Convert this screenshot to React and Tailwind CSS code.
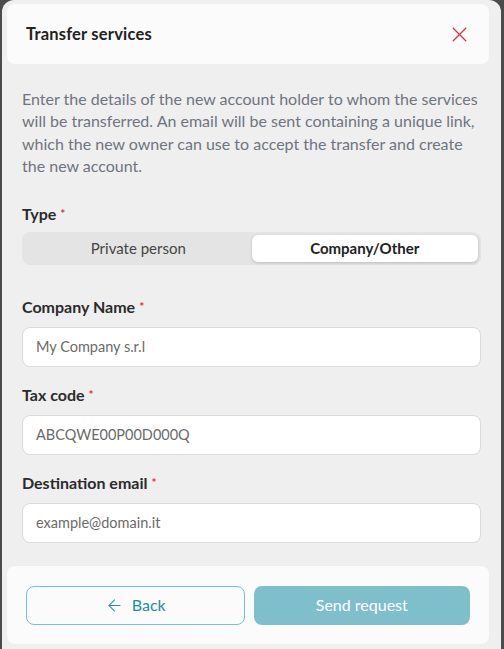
import { ArrowLeft, X } from 'lucide-react';

const fields = [
  { label: 'Company Name', value: 'My Company s.r.l' },
  { label: 'Tax code', value: 'ABCQWE00P00D000Q' },
  { label: 'Destination email', value: 'example@domain.it' },
];

function Label({ children }) {
  return (
    <div className="text-[16px] font-bold leading-5 text-[#2b2b2b]">
      {children}
      <span className="ml-1 align-top text-[12px] text-[#e0303e]">*</span>
    </div>
  );
}

export default function App() {
  return (
    <div className="h-[649px] overflow-hidden bg-[#4b4b4b] px-[2px] font-['Lato','Noto_Sans',sans-serif]">
      <div className="flex h-full w-[499px] flex-col rounded-t-xl bg-[#efefef] pl-[5px] pr-[12px] pt-[4px]">
        <div className="flex h-[60px] items-center justify-between rounded-lg bg-[#fbfbfb] pl-[19px] pr-[17px]">
          <h1 className="text-[16.5px] font-bold tracking-[0.2px] text-[#222]">Transfer services</h1>
          <X className="h-[25px] w-[25px] text-[#e0303e]" strokeWidth={1.2} />
        </div>

        <div className="pl-[15px] pr-[8px]">
          <p className="mt-[24px] text-[16px] leading-[22.4px] text-[#6f7480]">
            Enter the details of the new account holder to whom the services will be transferred. An email will be sent containing a unique link, which the new owner can use to accept the transfer and create the new account.
          </p>

          <div className="mt-[26px]">
            <Label>Type</Label>
            <div className="mt-[8px] grid h-[33px] grid-cols-2 rounded-lg bg-[#e4e4e4] p-[3px]">
              <div className="flex items-center justify-center text-[15px] text-[#444]">Private person</div>
              <div className="flex items-center justify-center rounded-md bg-white text-[15px] font-bold text-[#222] shadow-[0_1px_3px_rgba(0,0,0,0.18)]">
                Company/Other
              </div>
            </div>
          </div>

          <div className="mt-[32px] flex flex-col gap-[18px]">
            {fields.map((field) => (
              <div key={field.label}>
                <Label>{field.label}</Label>
                <div className="mt-[10px] flex h-[40px] items-center rounded-lg border border-[#dadada] bg-white px-[13px] text-[14.5px] text-[#6b6b6b]">
                  {field.value}
                </div>
              </div>
            ))}
          </div>
        </div>

        <div className="mt-[23px] flex h-[78px] gap-[9px] rounded-lg bg-[#fbfbfb] px-[19px] pt-[20px]">
          <button className="flex h-[39px] flex-1 items-center justify-center gap-[8px] rounded-lg border border-[#74c3cf] text-[16px] text-[#1d8fa0]">
            <ArrowLeft className="h-[19px] w-[19px]" strokeWidth={1.3} />
            Back
          </button>
          <button className="flex h-[39px] flex-1 items-center justify-center rounded-lg bg-[#7fbfcc] text-[16px] text-white">
            Send request
          </button>
        </div>
      </div>
    </div>
  );
}
